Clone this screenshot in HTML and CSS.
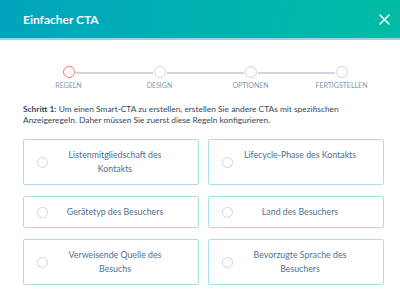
FILE: index.html
```html
<!DOCTYPE html>
<html lang="de">
<head>
    <meta charset="UTF-8">
    <meta name="viewport" content="width=device-width, initial-scale=1.0">
    <title>Einfacher CTA</title>
    <link rel="stylesheet" href="styles.css">
</head>
<body>
    <div class="modal">
        <div class="modal-header">
            <h2>Einfacher CTA</h2>
            <button class="close-btn" aria-label="Schließen">
                <svg width="11" height="11" viewBox="0 0 11 11">
                    <path d="M1 1 L10 10 M10 1 L1 10" stroke="#fff" stroke-width="1.5" stroke-linecap="round"/>
                </svg>
            </button>
        </div>

        <div class="modal-body">
            <ol class="stepper">
                <li class="step active"><span class="dot"></span><span class="label">Regeln</span></li>
                <li class="step"><span class="dot"></span><span class="label">Design</span></li>
                <li class="step"><span class="dot"></span><span class="label">Optionen</span></li>
                <li class="step"><span class="dot"></span><span class="label">Fertigstellen</span></li>
            </ol>

            <p class="intro"><strong>Schritt 1:</strong> Um einen Smart-CTA zu erstellen, erstellen Sie andere CTAs mit spezifischen<br>Anzeigeregeln. Daher müssen Sie zuerst diese Regeln konfigurieren.</p>

            <div class="rule-grid">
                <label class="rule-card"><span class="radio"></span><span class="rule-text">Listenmitgliedschaft des Kontakts</span></label>
                <label class="rule-card"><span class="radio"></span><span class="rule-text">Lifecycle-Phase des Kontakts</span></label>
                <label class="rule-card"><span class="radio"></span><span class="rule-text">Gerätetyp des Besuchers</span></label>
                <label class="rule-card"><span class="radio"></span><span class="rule-text">Land des Besuchers</span></label>
                <label class="rule-card"><span class="radio"></span><span class="rule-text">Verweisende Quelle des Besuchs</span></label>
                <label class="rule-card"><span class="radio"></span><span class="rule-text">Bevorzugte Sprache des Besuchers</span></label>
            </div>
        </div>
    </div>
</body>
</html>
```

FILE: styles.css
```css
body {
    margin: 0;
    background: #fff;
    font-family: Lato, "Open Sans", Arial, sans-serif;
    color: #33475b;
}
.modal-header {
    height: 38px;
    display: flex;
    align-items: center;
    justify-content: space-between;
    padding: 0 6px 0 23px;
    background: linear-gradient(100deg, #00a4bd, #00bda5);
    border-bottom: 2px solid #8fd8e2;
}
.modal-header h2 {
    margin: 0;
    font-size: 12px;
    font-weight: 700;
    color: #fff;
}
.close-btn {
    background: none;
    border: none;
    padding: 0;
    width: 20px;
    height: 20px;
    display: flex;
    align-items: center;
    justify-content: center;
    cursor: pointer;
}
.modal-body {
    padding: 26px 16px 0 23px;
}
.stepper {
    list-style: none;
    margin: 0;
    padding: 0;
    display: grid;
    grid-template-columns: repeat(4, 91px);
}
.step {
    position: relative;
    display: flex;
    flex-direction: column;
    align-items: center;
}
.step:not(:last-child)::after {
    content: "";
    position: absolute;
    top: 6px;
    left: calc(50% + 7px);
    width: 77px;
    height: 1.5px;
    background: #cbd6e2;
}
.dot {
    width: 10px;
    height: 10px;
    border: 1.5px solid #cbd6e2;
    border-radius: 50%;
    background: #fff;
}
.step.active .dot {
    border-color: #ff7a59;
}
.label {
    margin-top: 3px;
    font-size: 7px;
    line-height: 9px;
    text-transform: uppercase;
    color: #7c98b6;
}
.intro {
    margin: 14px 0 13px;
    font-size: 8.4px;
    line-height: 11px;
    color: #33475b;
}
.intro strong {
    font-weight: 700;
}
.rule-grid {
    display: grid;
    grid-template-columns: 1fr 1fr;
    column-gap: 9px;
    row-gap: 11px;
}
.rule-card {
    display: flex;
    align-items: center;
    padding: 8px 22px 8px 13px;
    border: 1px solid #a8dfe8;
    border-radius: 2px;
    cursor: pointer;
}
.radio {
    flex: none;
    width: 9px;
    height: 9px;
    border: 1px solid #cbd6e2;
    border-radius: 50%;
    margin-right: 6px;
}
.rule-text {
    flex: 1;
    align-self: flex-start;
    text-align: center;
    font-size: 8.8px;
    line-height: 14px;
    color: #516f90;
}
```
